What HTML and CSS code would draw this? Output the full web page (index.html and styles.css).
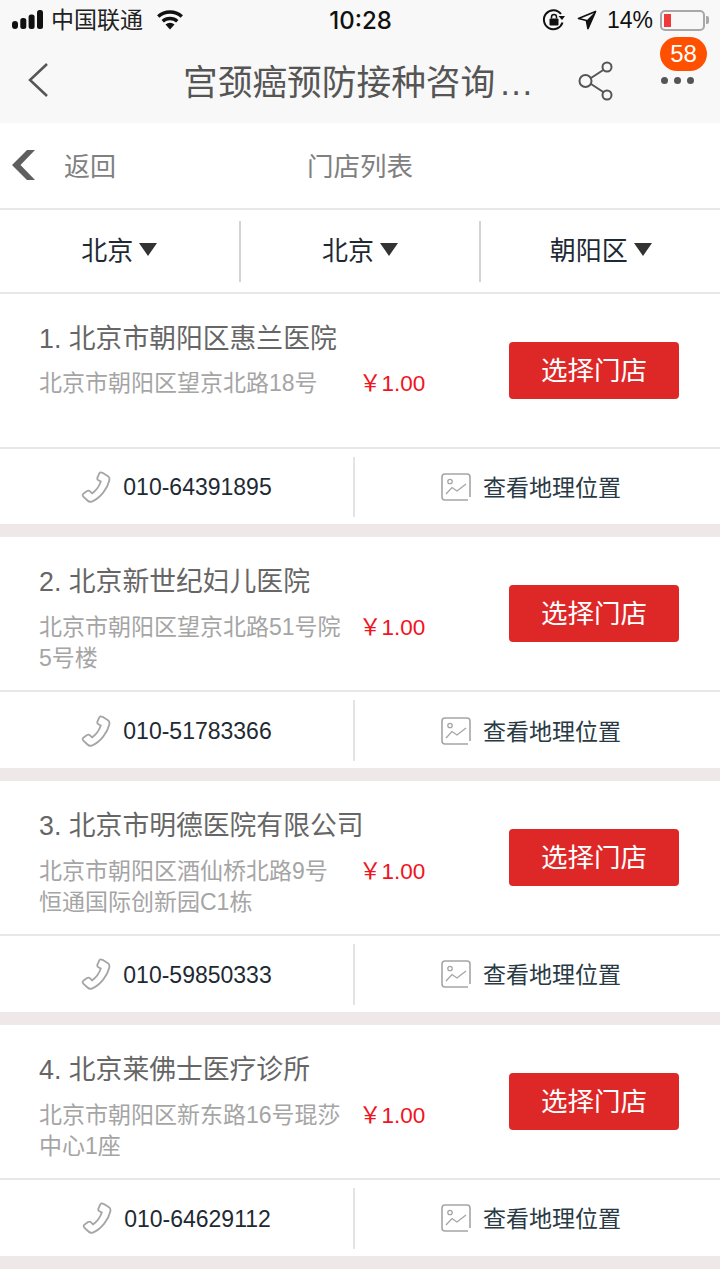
FILE: index.html
```html
<!DOCTYPE html>
<html lang="zh-CN">
<head>
    <meta charset="UTF-8">
    <meta name="viewport" content="width=device-width, initial-scale=1.0">
    <title>门店列表</title>
    <link rel="stylesheet" href="styles.css">
</head>
<body>
    <svg class="defs" width="0" height="0">
        <symbol id="icon-phone" viewBox="0 0 30 32">
            <path d="M21.500 1.800l5.500 3.400c1.400.9 1.700 2.400 1.300 4.300-1.800 8-8.800 17.300-17 20.800-2 .8-3.500.5-4.800-.8l-4.200-3.900c-1-1.100-.8-2.400.3-3.100l3.500-2.400c1.100-.7 2.200-.5 3 .4l1.900 1.900c3.600-2.500 7.400-7.700 8.800-11.900l-2.400-1.200c-1-.6-1.400-1.700-.9-2.900l1.800-4c.6-1.200 1.700-1.400 2.700-.6z" fill="none" stroke="#a5a5a5" stroke-width="1.800"/>
        </symbol>
        <symbol id="icon-map" viewBox="0 0 30 28">
            <path d="M27 27H4a3 3 0 0 1-3-3V4a3 3 0 0 1 3-3h22a3 3 0 0 1 3 3v20" fill="none" stroke="#a5a5a5" stroke-width="1.600"/>
            <circle cx="9" cy="8.500" r="2.200" fill="none" stroke="#a5a5a5" stroke-width="1.300"/>
            <path d="M5 21l6-6.500 5 3.500 9-7" fill="none" stroke="#a5a5a5" stroke-width="1.300"/>
        </symbol>
    </svg>

    <header class="top">
        <div class="status">
            <div class="status-left">
                <svg class="signal" width="31" height="20" viewBox="0 0 31 20"><rect x="0" y="11" width="6" height="8" rx="3"/><rect x="8.300" y="8" width="6" height="11" rx="2.500"/><rect x="16.600" y="4.500" width="6" height="14.500" rx="2.500"/><rect x="25" y="0" width="6" height="19" rx="2.500"/></svg>
                <span class="carrier">中国联通</span>
                <svg class="wifi" width="28" height="20" viewBox="0 0 28 20"><path d="M14 19.500l-4.500-5a6.500 6.500 0 0 1 9 0z" fill="#111"/><path d="M6.700 11.200a11 11 0 0 1 14.600 0M2.200 6.600a17.500 17.500 0 0 1 23.600 0" fill="none" stroke="#111" stroke-width="3.400"/></svg>
            </div>
            <div class="time">10:28</div>
            <div class="status-right">
                <svg width="24" height="24" viewBox="0 0 24 24"><path d="M20.500 14.500A9.500 9.500 0 1 1 19 6" fill="none" stroke="#111" stroke-width="2"/><path d="M16.500 8l6.500 0-3 4z" fill="#111"/><rect x="7.500" y="10.500" width="9" height="7" rx="1" fill="#111"/><path d="M9.500 10.500V9a2.500 2.500 0 0 1 5 0v1.500" fill="none" stroke="#111" stroke-width="1.500"/></svg>
                <svg class="arrow" width="20" height="20" viewBox="0 0 20 20"><path d="M18.500 1.500L1.500 8.500l8 2 1.500 8z" fill="none" stroke="#111" stroke-width="1.800" stroke-linejoin="round"/><path d="M18.500 1.500L9.500 10.500l1.500 8z" fill="#111"/></svg>
                <span class="percent">14%</span>
                <div class="battery"><div class="battery-level"></div></div>
                <div class="battery-tip"></div>
            </div>
        </div>
        <div class="nav">
            <svg class="nav-back" width="24" height="36" viewBox="0 0 24 36"><path d="M20 2L3 18l17 16" fill="none" stroke="#555" stroke-width="2.500"/></svg>
            <h1 class="nav-title">宫颈癌预防接种咨询<span class="nav-dots">...</span></h1>
            <svg class="nav-share" width="40" height="42" viewBox="0 0 40 42"><path d="M26 9.500L13 18M13 24l13 8.500" stroke="#555" stroke-width="2" fill="none"/><circle cx="29" cy="7" r="4.500" fill="none" stroke="#555" stroke-width="2"/><circle cx="7.500" cy="21" r="6" fill="none" stroke="#555" stroke-width="2"/><circle cx="29" cy="35" r="4.500" fill="none" stroke="#555" stroke-width="2"/></svg>
            <div class="nav-more">
                <span class="dot"></span><span class="dot"></span><span class="dot"></span>
                <span class="badge">58</span>
            </div>
        </div>
    </header>

    <div class="subhead">
        <svg class="sub-back" width="26" height="32" viewBox="0 0 26 32"><path d="M24 1L9.500 16 24 31H16L1 16 16 1z" fill="#5f5f5f"/></svg>
        <span class="sub-label">返回</span>
        <span class="sub-title">门店列表</span>
    </div>

    <div class="filters">
        <div class="filter">北京<i class="caret"></i></div>
        <div class="filter">北京<i class="caret"></i></div>
        <div class="filter">朝阳区<i class="caret"></i></div>
    </div>

    <section class="store">
        <div class="store-main">
            <div class="store-info">
                <h2 class="store-name">1. 北京市朝阳区惠兰医院</h2>
                <div class="store-detail">
                    <p class="store-addr">北京市朝阳区望京北路18号</p>
                    <span class="store-price">￥1.00</span>
                </div>
            </div>
            <a class="store-btn">选择门店</a>
        </div>
        <div class="store-links">
            <div class="store-link">
                <svg width="30" height="32"><use href="#icon-phone"/></svg>
                <span>010-64391895</span>
            </div>
            <div class="store-link">
                <svg width="30" height="28"><use href="#icon-map"/></svg>
                <span>查看地理位置</span>
            </div>
        </div>
    </section>

    <section class="store">
        <div class="store-main">
            <div class="store-info">
                <h2 class="store-name">2. 北京新世纪妇儿医院</h2>
                <div class="store-detail">
                    <p class="store-addr">北京市朝阳区望京北路51号院5号楼</p>
                    <span class="store-price">￥1.00</span>
                </div>
            </div>
            <a class="store-btn">选择门店</a>
        </div>
        <div class="store-links">
            <div class="store-link">
                <svg width="30" height="32"><use href="#icon-phone"/></svg>
                <span>010-51783366</span>
            </div>
            <div class="store-link">
                <svg width="30" height="28"><use href="#icon-map"/></svg>
                <span>查看地理位置</span>
            </div>
        </div>
    </section>

    <section class="store">
        <div class="store-main">
            <div class="store-info">
                <h2 class="store-name">3. 北京市明德医院有限公司</h2>
                <div class="store-detail">
                    <p class="store-addr">北京市朝阳区酒仙桥北路9号恒通国际创新园C1栋</p>
                    <span class="store-price">￥1.00</span>
                </div>
            </div>
            <a class="store-btn">选择门店</a>
        </div>
        <div class="store-links">
            <div class="store-link">
                <svg width="30" height="32"><use href="#icon-phone"/></svg>
                <span>010-59850333</span>
            </div>
            <div class="store-link">
                <svg width="30" height="28"><use href="#icon-map"/></svg>
                <span>查看地理位置</span>
            </div>
        </div>
    </section>

    <section class="store">
        <div class="store-main">
            <div class="store-info">
                <h2 class="store-name">4. 北京莱佛士医疗诊所</h2>
                <div class="store-detail">
                    <p class="store-addr">北京市朝阳区新东路16号琨莎中心1座</p>
                    <span class="store-price">￥1.00</span>
                </div>
            </div>
            <a class="store-btn">选择门店</a>
        </div>
        <div class="store-links">
            <div class="store-link">
                <svg width="30" height="32"><use href="#icon-phone"/></svg>
                <span>010-64629112</span>
            </div>
            <div class="store-link">
                <svg width="30" height="28"><use href="#icon-map"/></svg>
                <span>查看地理位置</span>
            </div>
        </div>
    </section>
</body>
</html>
```

FILE: styles.css
```css
* {
    box-sizing: border-box;
}

html, body {
    height: 1280px;
    overflow: hidden;
}

body {
    margin: 0;
    background-color: #fff;
    font-family: "Liberation Sans", "Noto Sans CJK SC", sans-serif;
}

h1, h2, p {
    margin: 0;
    font-weight: normal;
}

.defs {
    display: block;
    height: 0;
}

.top {
    height: 123px;
    background-color: #f8f8f8;
}

.status {
    height: 40px;
    padding: 0 11px 0 12px;
    display: flex;
    align-items: center;
    justify-content: space-between;
    color: #111;
}

.status-left, .status-right {
    width: 290px;
    display: flex;
    align-items: center;
}

.status-right {
    justify-content: flex-end;
}

.signal {
    fill: #111;
}

.carrier {
    margin-left: 8px;
    margin-top: -4px;
    font-size: 23px;
    color: #222;
}

.wifi {
    margin-left: 13px;
}

.time {
    font-family: Inter, "Liberation Sans", sans-serif;
    font-size: 24px;
    font-weight: 500;
}

.arrow {
    margin-left: 11px;
}

.percent {
    margin-left: 10px;
    font-size: 23px;
}

.battery {
    margin-left: 7px;
    width: 45px;
    height: 21px;
    padding: 2px;
    border: 2px solid #a8a8a8;
    border-radius: 5px;
}

.battery-level {
    width: 7px;
    height: 100%;
    background-color: #f03a3a;
}

.battery-tip {
    width: 3px;
    height: 8px;
    margin-left: 1px;
    background-color: #a8a8a8;
    border-radius: 0 2px 2px 0;
}

.nav {
    height: 83px;
    padding: 0 24px 0 27px;
    display: flex;
    align-items: center;
}

.nav-back {
    flex: none;
    margin-top: -3px;
}

.nav-title {
    margin-left: 132px;
    margin-top: -4px;
    width: 362px;
    font-size: 34.700px;
    color: #555;
    white-space: nowrap;
}

.nav-dots {
    margin-left: 5px;
    letter-spacing: 1.500px;
}

.nav-share {
    flex: none;
    margin-left: 33px;
    margin-top: -2px;
}

.nav-more {
    position: relative;
    margin-left: 43px;
    margin-top: -3px;
    width: 33px;
    display: flex;
    justify-content: space-between;
}

.dot {
    width: 7px;
    height: 7px;
    border-radius: 50%;
    background-color: #555;
}

.badge {
    position: absolute;
    left: -1px;
    top: -40px;
    width: 47px;
    height: 34px;
    border-radius: 17px;
    background-color: #ff5000;
    color: #fff;
    font-size: 24px;
    line-height: 34px;
    text-align: center;
}

.subhead {
    height: 87px;
    padding: 0 11px 2px;
    display: flex;
    align-items: center;
    border-bottom: 2px solid #e8e8e8;
    color: #808080;
    font-size: 26px;
}

.sub-label {
    margin-left: 27px;
}

.sub-title {
    margin-left: 191px;
    font-size: 26.500px;
}

.filters {
    height: 83.600px;
    padding: 11px 0 10px;
    display: flex;
    border-bottom: 2px solid #e8e8e8;
}

.filter {
    flex: 1;
    display: flex;
    align-items: center;
    justify-content: center;
    border-left: 2px solid #d4d4d4;
    color: #1e2a33;
    font-size: 26px;
    padding-bottom: 6px;
}

.filter:first-child {
    border-left: none;
}

.caret {
    margin-left: 6px;
    margin-top: 3px;
    width: 0;
    height: 0;
    border-left: 9.500px solid transparent;
    border-right: 9.500px solid transparent;
    border-top: 13px solid #333;
}

.store {
    height: 243.750px;
    border-bottom: 13px solid #eee8e8;
}

.store-main {
    height: 155px;
    padding: 0 41px 0 39px;
    display: flex;
    justify-content: space-between;
    border-bottom: 2px solid #e8e8e8;
}

.store-info {
    width: 384px;
}

.store-name {
    margin-top: 26px;
    font-size: 26.800px;
    line-height: 38px;
    color: #666;
}

.store-detail {
    margin-top: 10.700px;
    display: flex;
    justify-content: space-between;
}

.store-addr {
    width: 305px;
    font-size: 23px;
    line-height: 31px;
    color: #a5a5a5;
}

.store-price {
    width: 64px;
    font-size: 22.500px;
    line-height: 31px;
    color: #f0141e;
    white-space: nowrap;
}

.store-btn {
    margin-top: 48px;
    width: 170px;
    height: 57px;
    border-radius: 4px;
    background-color: #de2828;
    color: #fff;
    font-size: 26.500px;
    line-height: 59px;
    text-align: center;
}

.store-links {
    height: 75.750px;
    padding: 8px 0 7px;
    display: flex;
}

.store-link {
    display: flex;
    align-items: center;
    justify-content: center;
    color: #1e2a33;
    font-size: 23px;
}

.store-link:first-child {
    width: 353px;
}

.store-link:first-child span {
    padding-top: 2px;
}

.store-link:last-child {
    flex: 1;
    border-left: 2px solid #e4e4e4;
    padding-right: 13px;
}

.store-link:last-child span {
    padding-bottom: 2px;
    color: #2a3a44;
}

.store-link svg {
    flex: none;
    margin-right: 12px;
}
```
